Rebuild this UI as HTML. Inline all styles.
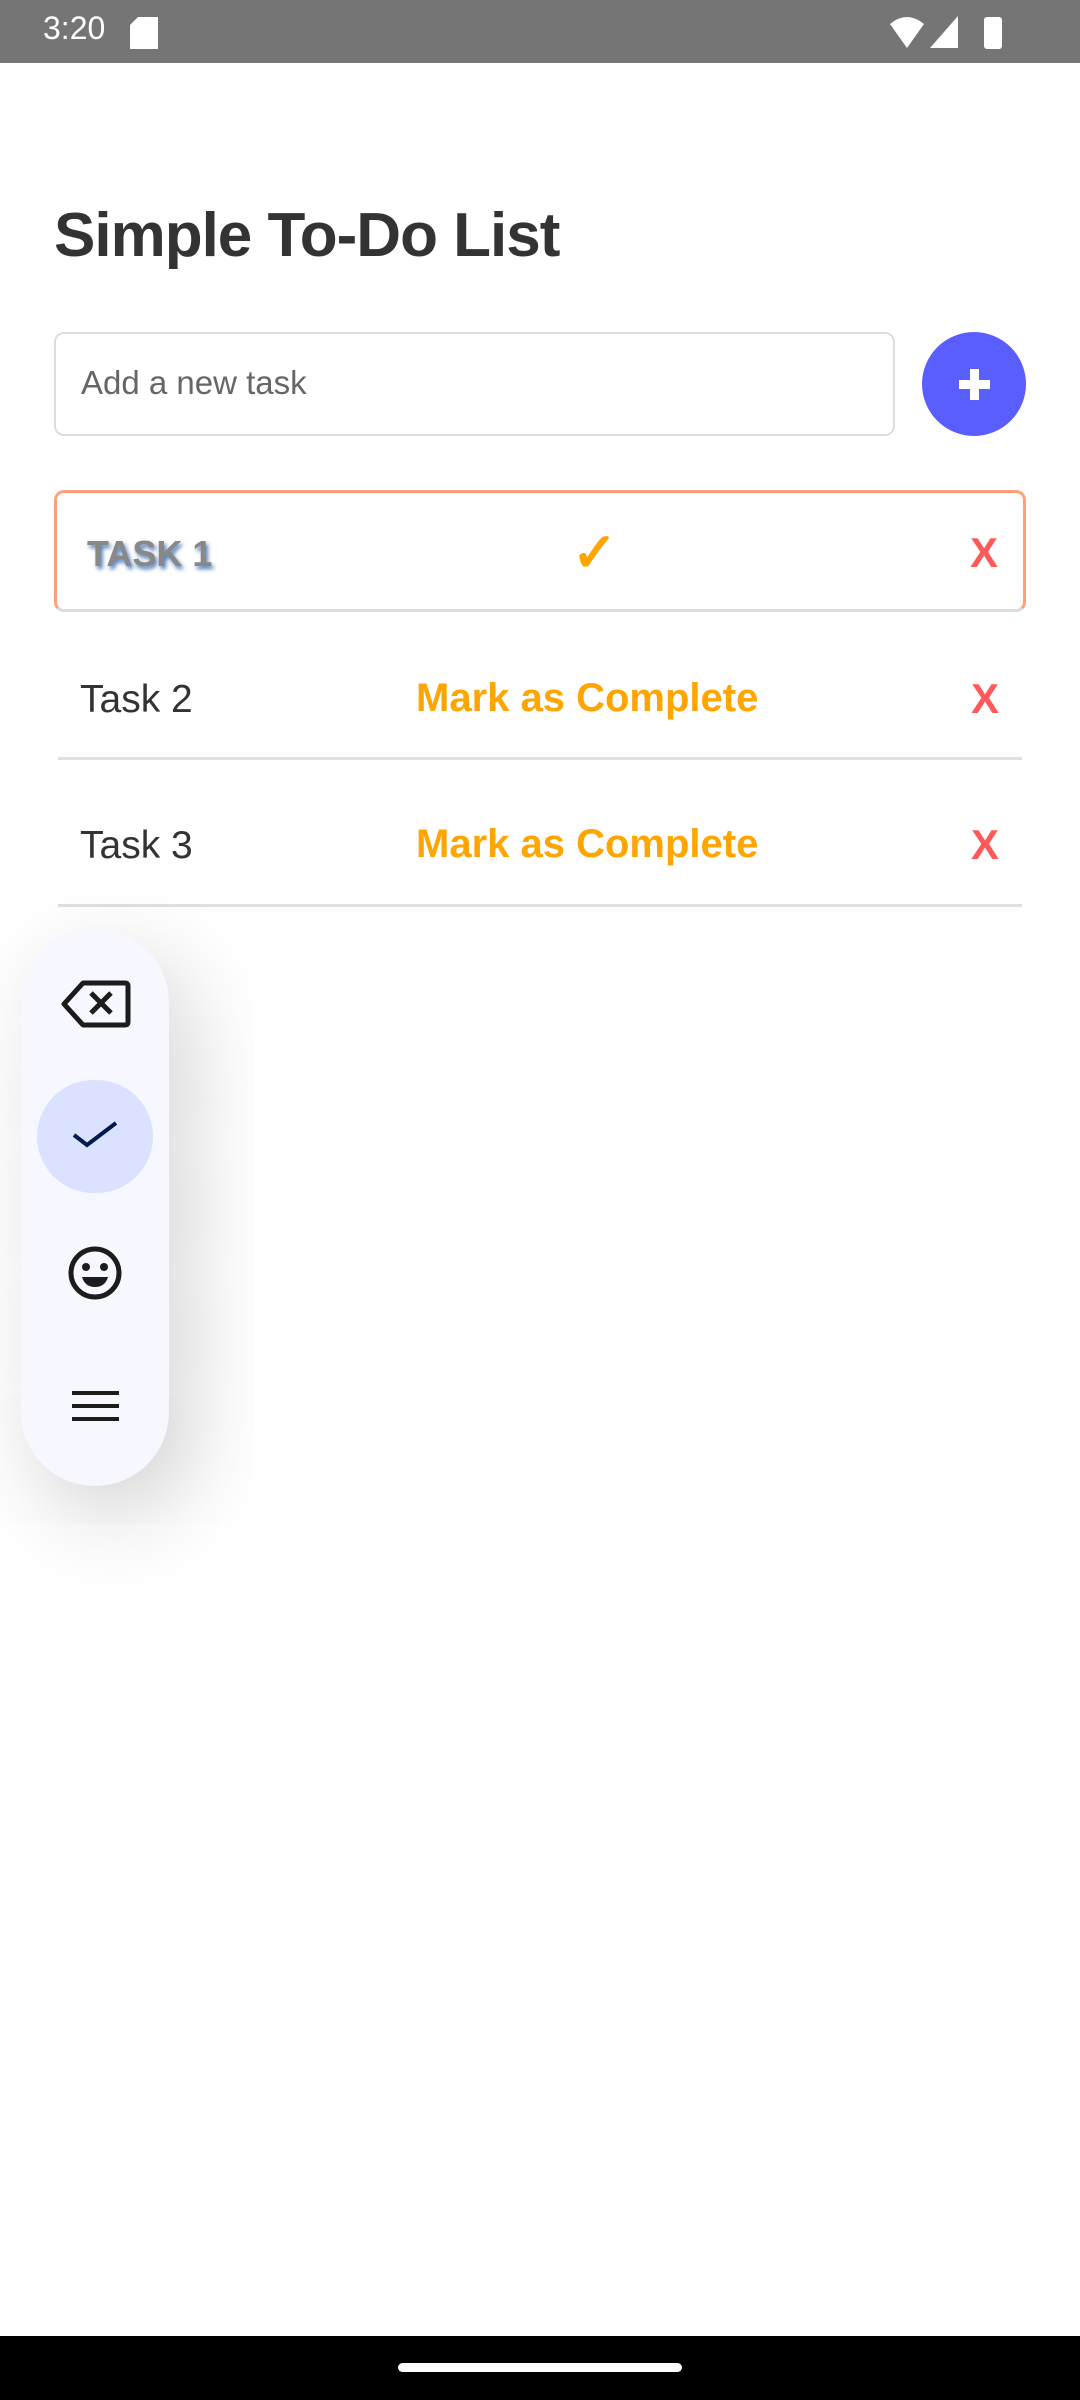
<!DOCTYPE html>
<html><head><meta charset="utf-8"><style>
*{margin:0;padding:0;box-sizing:border-box}
body{width:1080px;height:2400px;background:#fff;position:relative;overflow:hidden;font-family:"Liberation Sans",sans-serif}
.sb{position:absolute;left:0;top:0;width:1080px;height:63px;background:#757575;color:#fff}
.abs{position:absolute}
.title{left:54px;top:200px;font-size:62px;font-weight:bold;color:#333;letter-spacing:-1px}
.input{left:54px;top:332px;width:841px;height:104px;border:2px solid #ddd;border-radius:10px;font-size:33px;color:#666;padding:30px 0 0 25px}
.plus{left:922px;top:332px;width:104px;height:104px;border-radius:52px;background:#5B5EFF}
.t1{left:54px;top:490px;width:972px;height:122px;border:3px solid #FFA07A;border-bottom-color:#ddd;border-radius:10px}
.row{position:absolute;left:58px;width:964px;border-bottom:3px solid #e0e0e0}
.tt{font-size:39px;color:#333;position:absolute}
.mc{font-size:40px;color:#FFA500;font-weight:bold;position:absolute;letter-spacing:0}
.x{font-size:42px;color:#FF5A5A;font-weight:bold;position:absolute}
</style></head><body>
<div class="sb">
<div class="abs" style="left:43px;top:10px;font-size:32px">3:20</div>
<svg class="abs" style="left:130px;top:17px" width="28" height="32"><path d="M8 0H28V32H0V8Z" fill="#fff"/></svg>
<svg class="abs" style="left:890px;top:14px" width="130" height="36"><path d="M0 10Q17 -4 34 10L17 34Z" fill="#fff"/><path d="M68 2V34H40Z" fill="#fff"/><rect x="94" y="3" width="18" height="32" rx="3" fill="#fff"/></svg>
</div>
<div class="abs title">Simple To-Do List</div>
<div class="abs input">Add a new task</div>
<div class="abs plus"><div class="abs" style="left:48px;top:37px;width:9px;height:31px;background:#fff"></div><div class="abs" style="left:37px;top:48px;width:31px;height:9px;background:#fff"></div></div>
<div class="abs t1">
<div class="abs" style="left:30px;top:40px;font-size:36px;font-weight:bold;color:#888;text-shadow:2px 3px 4px #4a78b8">TASK 1</div>
<div class="abs" style="left:515px;top:28px;font-size:54px;font-weight:bold;color:#FFA500">✓</div>
<div class="abs" style="left:913px;top:36px;font-size:42px;font-weight:bold;color:#FF5A5A">X</div>
</div>
<div class="row" style="top:640px;height:120px"><div class="tt" style="left:22px;top:38px">Task 2</div><div class="mc" style="left:358px;top:36px">Mark as Complete</div><div class="x" style="left:913px;top:35px">X</div></div>
<div class="row" style="top:786px;height:121px"><div class="tt" style="left:22px;top:38px">Task 3</div><div class="mc" style="left:358px;top:36px">Mark as Complete</div><div class="x" style="left:913px;top:35px">X</div></div>
<div class="abs" style="left:21px;top:929px;width:148px;height:557px;border-radius:74px;background:#F7F7FF;box-shadow:20px 30px 90px rgba(0,0,0,0.18)">
<svg class="abs" style="left:40px;top:51px" width="70" height="48" viewBox="0 0 70 48"><path d="M22 3H64Q67 3 67 6V42Q67 45 64 45H22L3 24Z" fill="none" stroke="#1c1c1c" stroke-width="5" stroke-linejoin="round"/><path d="M30 13L50 33M50 13L30 33" stroke="#1c1c1c" stroke-width="5"/></svg>
<div class="abs" style="left:16px;top:151px;width:116px;height:113px;border-radius:58px;background:#DAE2FF"></div>
<svg class="abs" style="left:50px;top:188px" width="50" height="40"><path d="M3 18L16 28L45 6" fill="none" stroke="#001a4d" stroke-width="4"/></svg>
<svg class="abs" style="left:46px;top:316px" width="56" height="56"><circle cx="28" cy="28" r="24" fill="none" stroke="#1c1c1c" stroke-width="5"/><circle cx="19" cy="22" r="4" fill="#1c1c1c"/><circle cx="37" cy="22" r="4" fill="#1c1c1c"/><path d="M15 32H41Q38 42 28 42Q18 42 15 32Z" fill="#1c1c1c"/></svg>
<div class="abs" style="left:51px;top:462px;width:47px;height:4px;background:#1c1c1c"></div>
<div class="abs" style="left:51px;top:475px;width:47px;height:4px;background:#1c1c1c"></div>
<div class="abs" style="left:51px;top:488px;width:47px;height:4px;background:#1c1c1c"></div>
</div>
<div class="abs" style="left:0;top:2336px;width:1080px;height:64px;background:#000"><div class="abs" style="left:398px;top:27px;width:284px;height:9px;border-radius:5px;background:#fff"></div></div>
</body></html>
